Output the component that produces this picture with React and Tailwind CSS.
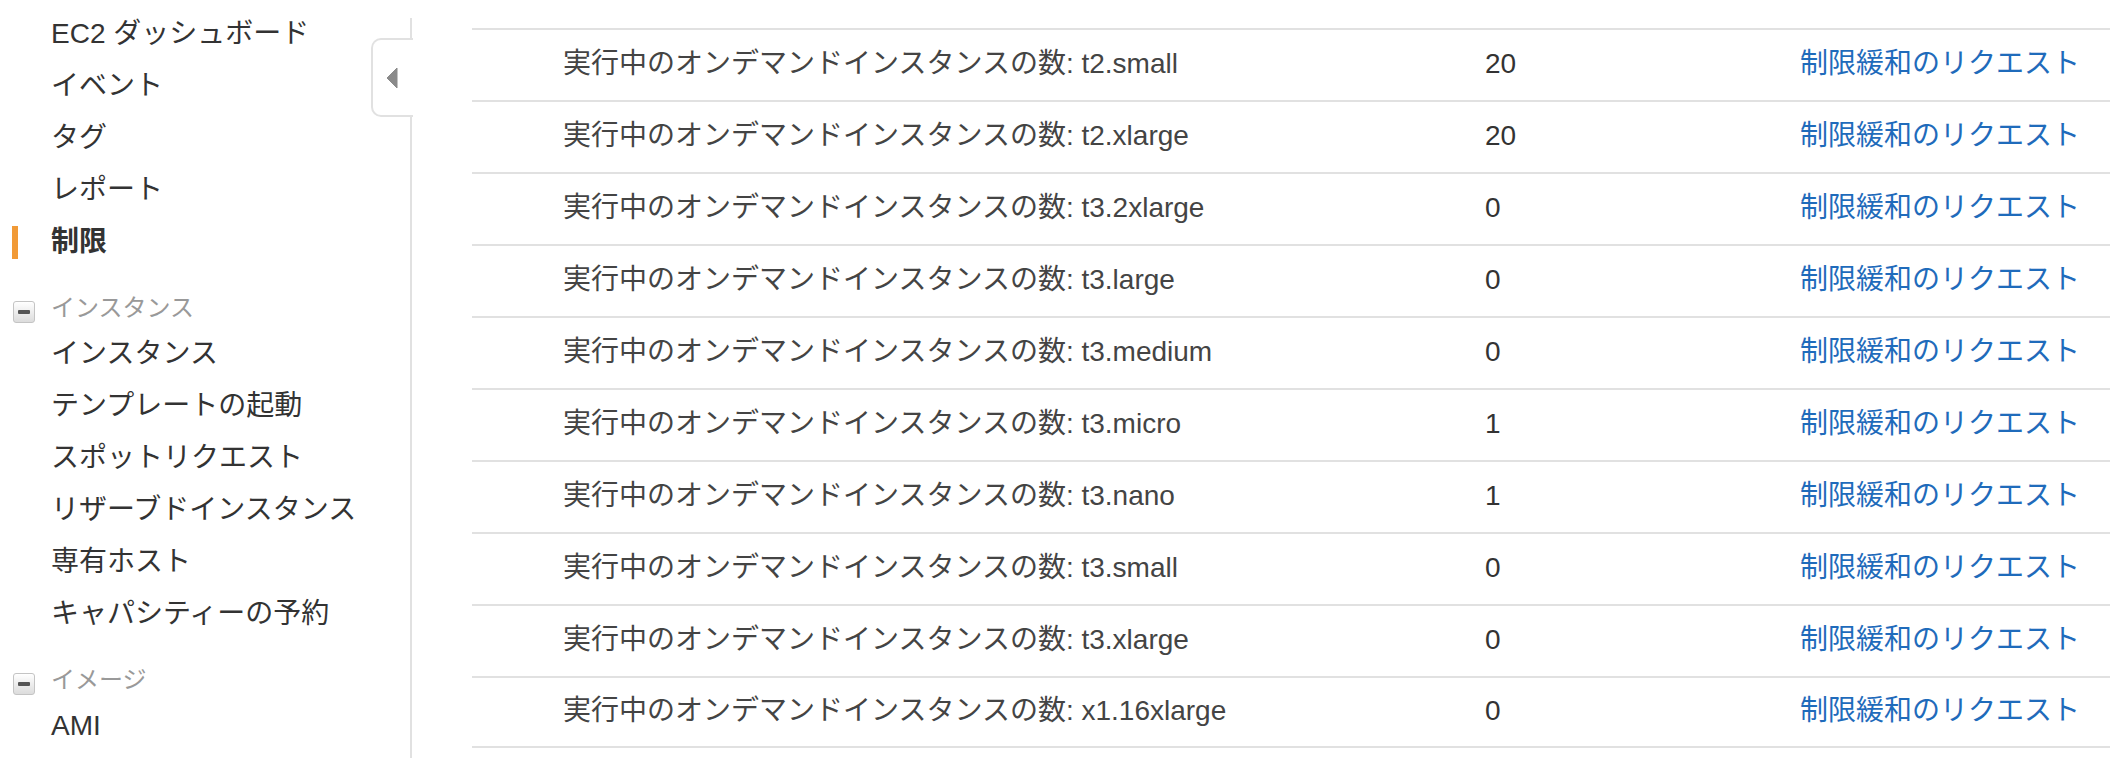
import React from "react";

const navTop = ["EC2 ダッシュボード", "イベント", "タグ", "レポート"];
const instanceItems = [
	"インスタンス",
	"テンプレートの起動",
	"スポットリクエスト",
	"リザーブドインスタンス",
	"専有ホスト",
	"キャパシティーの予約",
];

const limits = [
	{ type: "t2.small", value: 20 },
	{ type: "t2.xlarge", value: 20 },
	{ type: "t3.2xlarge", value: 0 },
	{ type: "t3.large", value: 0 },
	{ type: "t3.medium", value: 0 },
	{ type: "t3.micro", value: 1 },
	{ type: "t3.nano", value: 1 },
	{ type: "t3.small", value: 0 },
	{ type: "t3.xlarge", value: 0 },
	{ type: "x1.16xlarge", value: 0 },
];

function NavItem({ label, active }) {
	return (
		<div className="relative flex h-[52px] items-center pl-[51px]">
			{active && (
				<span className="absolute left-[12px] top-[10px] h-[33px] w-[6px] bg-[#f19a37]" />
			)}
			<span className={active ? "font-bold text-[#333]" : "text-[#333]"}>
				{label}
			</span>
		</div>
	);
}

function GroupHeader({ label }) {
	return (
		<div className="mt-[20px] flex h-[40px] items-center">
			<span className="ml-[13px] mt-[8px] flex h-[22px] w-[22px] items-center justify-center rounded-[3px] border border-[#c4c4c4] bg-gradient-to-b from-white to-[#dcdcdc]">
				<span className="h-[4px] w-[12px] rounded-[1px] bg-[#555]" />
			</span>
			<span className="ml-[16px] text-[24px] text-[#999]">{label}</span>
		</div>
	);
}

export default function App() {
	return (
		<div
			className="relative flex h-[758px] w-[2110px] overflow-hidden bg-white text-[28px]"
			style={{ fontFamily: '"Liberation Sans", "Noto Sans CJK JP", sans-serif' }}
		>
			{/* sidebar */}
			<div className="w-[410px] shrink-0 pt-[8px]">
				{navTop.map((label) => (
					<NavItem key={label} label={label} />
				))}
				<NavItem label="制限" active />

				<GroupHeader label="インスタンス" />
				{instanceItems.map((label) => (
					<NavItem key={label} label={label} />
				))}

				<GroupHeader label="イメージ" />
				<NavItem label="AMI" />
			</div>
			<div className="mt-[18px] w-[2px] shrink-0 bg-[#e1e1e1]" />

			{/* collapse tab */}
			<div className="absolute left-[371px] top-[38px] flex h-[79px] w-[42px] items-center rounded-l-[10px] border-2 border-r-0 border-[#e1e1e1] bg-white">
				<svg width="12" height="22" viewBox="0 0 12 22" className="ml-[13px]">
					<path d="M11 1 L1 11 L11 21 Z" fill="#8a8a8a" stroke="#8a8a8a" strokeWidth="1" strokeLinejoin="round" />
				</svg>
			</div>

			{/* limits table */}
			<div className="ml-[60px] flex-1 pt-[28px]">
				{limits.map((row, i) => (
					<div
						key={row.type}
						className={
							"flex h-[72px] items-center border-t-2 border-[#e1e1e1] pb-[3px] " +
							(i === limits.length - 1 ? "border-b-2" : "")
						}
					>
						<div className="w-[1013px] shrink-0 pl-[91px] text-[#444]">
							実行中のオンデマンドインスタンスの数: {row.type}
						</div>
						<div className="flex-1 text-[#333]">{row.value}</div>
						<a href="#" className="pr-[30px] text-[#1f6bbb]">
							制限緩和のリクエスト
						</a>
					</div>
				))}
			</div>
		</div>
	);
}
